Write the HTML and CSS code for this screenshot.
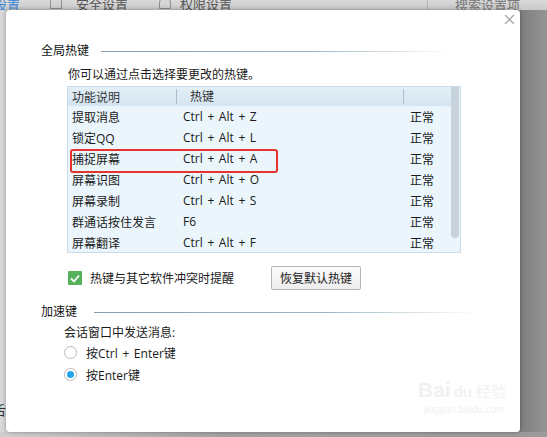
FILE: index.html
```html
<!DOCTYPE html>
<html lang="zh-CN">
<head>
    <meta charset="UTF-8">
    <title>热键设置</title>
    <link rel="stylesheet" href="styles.css">
</head>
<body>

    <!-- Settings window behind the dialog -->
    <div class="topbar">
        <span class="tab tab-active">设置</span>
        <span class="tab-icon box"></span>
        <span class="tab tab-safe">安全设置</span>
        <span class="tab-icon lock"></span>
        <span class="tab tab-perm">权限设置</span>
        <div class="search">搜索设置项</div>
    </div>

    <div class="stage">
        <div class="side-left"><span class="peek">舌</span></div>

        <!-- Hotkey dialog -->
        <div class="dialog">
            <button class="close" type="button">
                <svg width="11" height="11" viewBox="0 0 11 11"><path d="M1 1 L10 10 M10 1 L1 10" stroke="#a9a9a9" stroke-width="1.3" fill="none"/></svg>
            </button>

            <div class="group">
                <div class="group-title"><span>全局热键</span><i class="rule"></i></div>
                <p class="hint">你可以通过点击选择要更改的热键。</p>

                <div class="hotkeys">
                    <div class="hk-list">
                        <div class="hk-head">
                            <span class="c1">功能说明</span>
                            <span class="c2">热键</span>
                            <span class="c3"></span>
                        </div>
                        <div class="hk-row"><span class="c1">提取消息</span><span class="c2">Ctrl + Alt + Z</span><span class="c3">正常</span></div>
                        <div class="hk-row"><span class="c1">锁定QQ</span><span class="c2">Ctrl + Alt + L</span><span class="c3">正常</span></div>
                        <div class="hk-row"><span class="c1">捕捉屏幕</span><span class="c2">Ctrl + Alt + A</span><span class="c3">正常</span></div>
                        <div class="hk-row"><span class="c1">屏幕识图</span><span class="c2">Ctrl + Alt + O</span><span class="c3">正常</span></div>
                        <div class="hk-row"><span class="c1">屏幕录制</span><span class="c2">Ctrl + Alt + S</span><span class="c3">正常</span></div>
                        <div class="hk-row"><span class="c1">群通话按住发言</span><span class="c2">F6</span><span class="c3">正常</span></div>
                        <div class="hk-row"><span class="c1">屏幕翻译</span><span class="c2">Ctrl + Alt + F</span><span class="c3">正常</span></div>
                    </div>
                    <div class="hk-scroll"><div class="thumb"></div></div>
                    <div class="mark"></div>
                </div>

                <div class="opts">
                    <span class="check">
                        <svg width="10" height="9" viewBox="0 0 10 9"><path d="M1 4.5 L4 7.5 L9 1.5" stroke="#fff" stroke-width="1.8" fill="none"/></svg>
                    </span>
                    <span class="check-label">热键与其它软件冲突时提醒</span>
                    <button class="btn" type="button">恢复默认热键</button>
                </div>
            </div>

            <div class="group group-accel">
                <div class="group-title"><span>加速键</span><i class="rule rule-long"></i></div>
                <p class="sub">会话窗口中发送消息:</p>
                <label class="radio"><span class="dot"></span>按Ctrl + Enter键</label>
                <label class="radio"><span class="dot on"></span>按Enter键</label>
            </div>

            <div class="watermark">
                <div class="wm-logo">Bai<span class="wm-du">du</span><span class="wm-cn">经验</span></div>
                <div class="wm-url">jingyan.baidu.com</div>
            </div>
        </div>

        <div class="side-right"></div>
    </div>

</body>
</html>
```

FILE: styles.css
```css
body {
    margin: 0;
    width: 547px;
    height: 437px;
    overflow: hidden;
    background: linear-gradient(to right, #cfcfcf 0, #a4a4a4 40%, #9a9a9a 100%);
    font-family: "Open Sans", "Noto Sans CJK SC", sans-serif;
    font-size: 12px;
    color: #1a1a1a;
}

/* Window behind */
.topbar {
    display: flex;
    align-items: flex-start;
    height: 10px;
    overflow: hidden;
    background: linear-gradient(#d9d9d9, #c9c9c9);
    font-size: 13px;
    line-height: 14px;
    color: #555;
}

.tab {
    margin-top: -3px;
    white-space: nowrap;
}

.tab-active {
    margin-left: -6px;
    color: #3586d8;
}

.tab-icon {
    width: 12px;
    height: 12px;
    margin-top: -3px;
    border: 1px solid #8d8d8d;
    box-sizing: border-box;
}

.tab-icon.box {
    margin-left: 30px;
}

.tab-icon.lock {
    margin-left: 31px;
    border-radius: 6px 6px 0 0;
}

.tab-safe {
    margin-left: 14px;
}

.tab-perm {
    margin-left: 9px;
}

.search {
    margin-left: auto;
    width: 92px;
    height: 10px;
    padding-left: 27px;
    border-left: 1px solid #b5b5b5;
    line-height: 10px;
    color: #777;
    overflow: hidden;
}

.stage {
    display: flex;
    height: 422px;
}

.side-left {
    width: 6px;
    background: #d8d8d8;
    overflow: hidden;
}

.peek {
    display: block;
    margin-top: 390px;
    margin-left: -7px;
    font-size: 13px;
    color: #333;
}

.side-right {
    flex: 1;
    background: linear-gradient(to right, #7e7e7e, #959595);
}

/* Dialog */
.dialog {
    position: relative;
    width: 514px;
    height: 422px;
    box-sizing: border-box;
    padding: 33px 0 0 35px;
    background: #fff;
    border-radius: 4px;
    box-shadow: 0 0 4px rgba(0, 0, 0, 0.35);
}

.close {
    position: absolute;
    top: 4px;
    right: 5px;
    width: 11px;
    height: 11px;
    padding: 0;
    border: none;
    background: none;
}

.close svg {
    display: block;
}

.group-title {
    display: flex;
    align-items: center;
    height: 16px;
    line-height: 16px;
    color: #111;
}

.rule {
    display: block;
    width: 350px;
    height: 1px;
    margin-left: 12px;
    background: linear-gradient(to right, #7e9fb2 0, #9db6c4 60%, rgba(255, 255, 255, 0) 100%);
}

.rule-long {
    width: 385px;
    margin-left: 17px;
}

.hint {
    margin: 8px 0 0 27px;
    line-height: 16px;
}

/* Hotkey list */
.hotkeys {
    position: relative;
    display: flex;
    width: 394px;
    height: 167px;
    margin: 3px 0 0 26px;
    box-sizing: border-box;
    border: 1px solid #c9dce8;
    background: #eaf5fc;
}

.hk-list {
    flex: 1;
}

.hk-head,
.hk-row {
    display: flex;
    align-items: center;
}

.hk-head {
    height: 19px;
    background: linear-gradient(#e4eff7, #d3e5f1);
    color: #333;
}

.hk-row {
    height: 21px;
}

.c1 {
    width: 104px;
    padding-left: 4px;
}

.c2 {
    width: 213px;
    padding-left: 7px;
    word-spacing: 1.5px;
}

.c3 {
    flex: 1;
    padding-left: 14px;
}

.hk-head .c2 {
    padding-left: 13px;
    border-left: 1px solid #a8bccb;
    line-height: 15px;
}

.hk-head .c3 {
    border-left: 1px solid #a8bccb;
    height: 15px;
}

.hk-scroll {
    width: 8px;
    padding-right: 1px;
}

.thumb {
    height: 151px;
    background: #c6d3dc;
    border-radius: 0 0 4px 4px;
}

.mark {
    position: absolute;
    left: 2px;
    top: 62px;
    width: 208px;
    height: 24px;
    box-sizing: border-box;
    border: 2px solid #e3352d;
    border-radius: 3px;
}

/* Options under the list */
.opts {
    display: flex;
    align-items: center;
    height: 24px;
    margin: 13px 0 0 27px;
}

.check {
    display: flex;
    align-items: center;
    justify-content: center;
    width: 14px;
    height: 14px;
    background: #57b15a;
    border-radius: 1px;
}

.check-label {
    margin-left: 8px;
}

.btn {
    margin-left: 37px;
    height: 24px;
    padding: 0 8px;
    border: 1px solid #b4b4b4;
    border-radius: 2px;
    background: linear-gradient(#fbfbfb, #ededed);
    font-family: inherit;
    font-size: 12px;
    color: #222;
}

/* Accelerator keys */
.group-accel {
    margin-top: 14px;
}

.sub {
    margin: 5px 0 0 23px;
    line-height: 16px;
}

.radio {
    display: flex;
    align-items: center;
    height: 21px;
    margin: 1px 0 0 23px;
    word-spacing: 1.5px;
}

.dot {
    display: flex;
    align-items: center;
    justify-content: center;
    width: 13px;
    height: 13px;
    margin-right: 9px;
    box-sizing: border-box;
    border: 1px solid #b9b9b9;
    border-radius: 50%;
    background: #fff;
}

.dot.on::after {
    content: "";
    width: 7px;
    height: 7px;
    border-radius: 50%;
    background: #22a6ec;
}

/* Watermark */
.watermark {
    position: absolute;
    left: 412px;
    top: 368px;
    color: #f1f1f1;
    font-family: "Liberation Sans", sans-serif;
}

.wm-logo {
    font-size: 21px;
    font-weight: bold;
    line-height: 24px;
}

.wm-du {
    margin-left: 3px;
    font-size: 15px;
}

.wm-cn {
    margin-left: 4px;
    font-family: "Noto Sans CJK SC", sans-serif;
    font-size: 15px;
    font-weight: normal;
}

.wm-url {
    margin-left: 6px;
    font-size: 10px;
    line-height: 12px;
}
```
